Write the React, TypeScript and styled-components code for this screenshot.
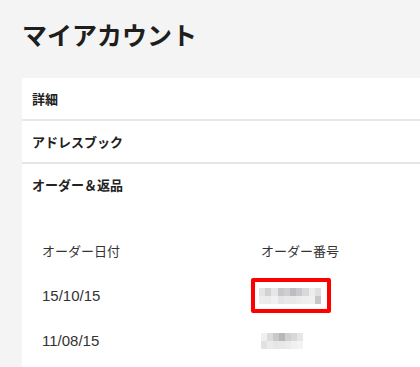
import React from "react";
import styled, { createGlobalStyle } from "styled-components";

const GlobalStyle = createGlobalStyle`
  html, body {
    margin: 0;
    padding: 0;
    background: #f4f4f4;
    overflow: hidden;
  }
  body {
    font-family: "Liberation Sans", "Noto Sans CJK JP", sans-serif;
    color: #222;
  }
`;

const Page = styled.div`
  width: 420px;
  height: 367px;
  padding-left: 22px;
  box-sizing: border-box;
  overflow: hidden;
`;

const Title = styled.h1`
  margin: 0;
  padding-top: 17px;
  height: 78px;
  box-sizing: border-box;
  font-family: "Noto Sans CJK JP", sans-serif;
  font-size: 25px;
  font-weight: 700;
  line-height: 34px;
  color: #1e1e1e;
`;

const Panel = styled.div`
  background: #fff;
  min-height: 300px;
`;

const Section = styled.div<{ $last?: boolean }>`
  height: 41px;
  display: flex;
  align-items: center;
  padding-left: 10px;
  border-bottom: ${(p) => (p.$last ? "none" : "2px solid #e6e6e6")};
  font-family: "Noto Sans CJK JP", sans-serif;
  font-size: 13px;
  font-weight: 700;
  color: #222;
`;

const OrdersTable = styled.div`
  display: grid;
  grid-template-columns: 219px 1fr;
  padding: 23px 0 0 20px;
`;

const Cell = styled.div<{ $head?: boolean }>`
  height: 45px;
  display: flex;
  align-items: center;
  font-family: ${(p) =>
    p.$head ? '"Noto Sans CJK JP", sans-serif' : '"Liberation Sans", sans-serif'};
  font-size: ${(p) => (p.$head ? "13px" : "15px")};
  color: #333;
`;

const Highlight = styled.div`
  width: 80px;
  height: 35px;
  margin-left: -10px;
  box-sizing: border-box;
  border: 4px solid #ff0000;
  border-radius: 2px;
  display: flex;
  align-items: center;
  padding-left: 4px;
`;

const Blur = styled.div<{ $w: number }>`
  width: ${(p) => p.$w}px;
  height: 16px;
  display: grid;
  grid-auto-flow: column;
  grid-template-rows: 1fr 1fr;
`;

const Pix = styled.span<{ $c: string }>`
  background: ${(p) => p.$c};
`;

const pixA = [
  "#e4e4e4", "#ececec", "#d2d2d2", "#ebebeb", "#e6e6e6", "#f0f0f0",
  "#c8c6c8", "#e4e4e6", "#cfcfd2", "#e8e8ea", "#bdbdbf", "#e8e8e8",
  "#c9c9cd", "#ececec", "#d9d9db", "#efefef", "#ededed", "#f0f0f0",
  "#e0e0e0", "#c8c8c8",
];

const pixB = [
  "#f0f0f0", "#e2e2e2", "#dcdcdc", "#ebebeb", "#c9c9cc", "#e6e6e6",
  "#b7b7b9", "#e8e8e8", "#d0d0d2", "#ebebeb", "#d8d8d8", "#f0f0f0",
  "#e6e6e6", "#f3f3f3",
];

const Pixelated: React.FC<{ colors: string[]; width: number }> = ({ colors, width }) => (
  <Blur $w={width}>
    {colors.map((c, i) => (
      <Pix key={i} $c={c} />
    ))}
  </Blur>
);

export default function App() {
  return (
    <Page>
      <GlobalStyle />
      <Title>マイアカウント</Title>
      <Panel>
        <Section>詳細</Section>
        <Section>アドレスブック</Section>
        <Section $last>オーダー＆返品</Section>
        <OrdersTable>
          <Cell $head>オーダー日付</Cell>
          <Cell $head>オーダー番号</Cell>
          <Cell>15/10/15</Cell>
          <Cell>
            <Highlight>
              <Pixelated colors={pixA} width={62} />
            </Highlight>
          </Cell>
          <Cell>11/08/15</Cell>
          <Cell>
            <Pixelated colors={pixB} width={42} />
          </Cell>
        </OrdersTable>
      </Panel>
    </Page>
  );
}
